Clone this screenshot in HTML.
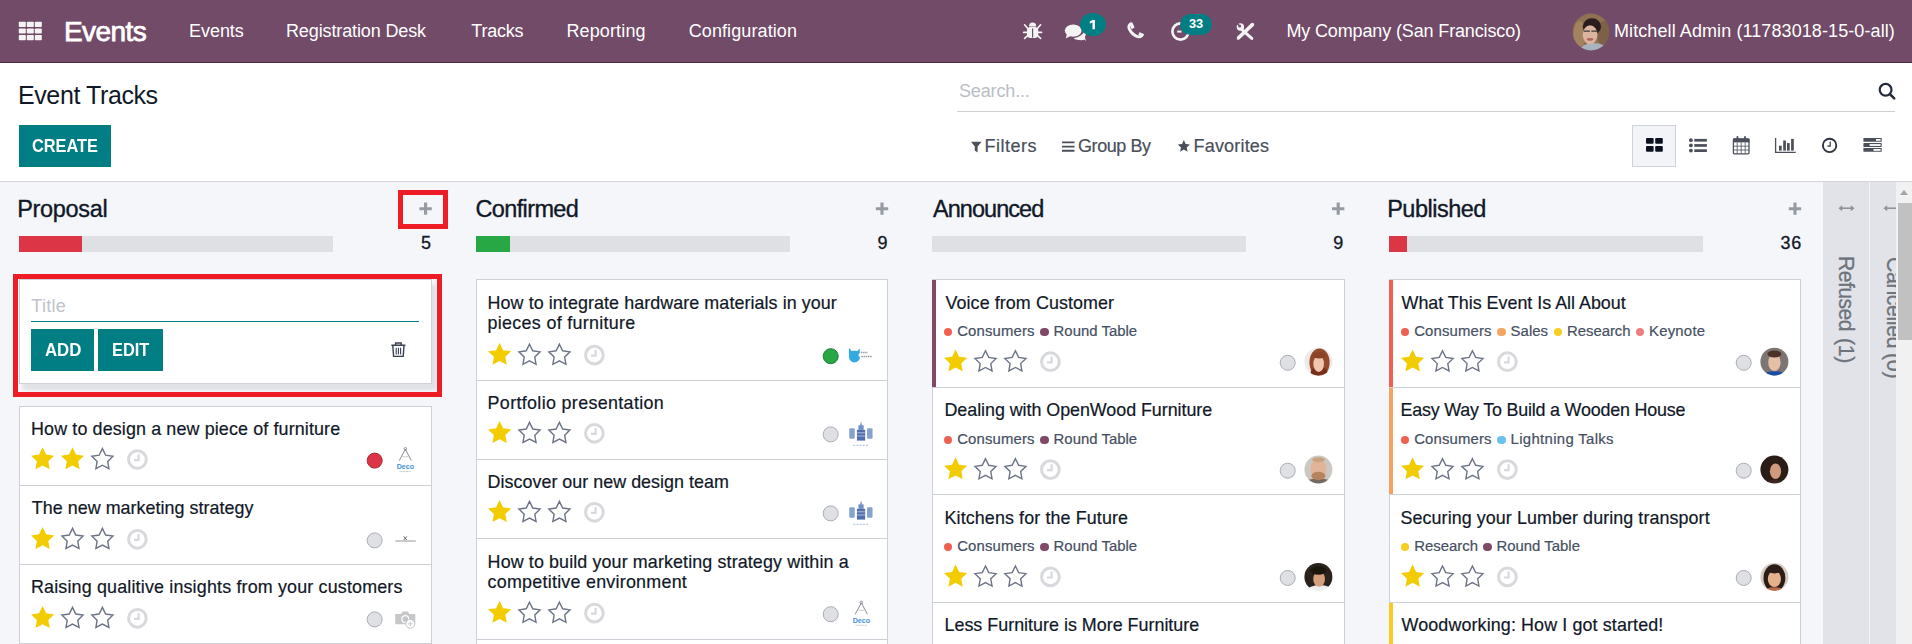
<!DOCTYPE html><html><head><meta charset="utf-8"><title>Event Tracks</title><style>
*{box-sizing:border-box;margin:0;padding:0}
html,body{width:1912px;height:644px;overflow:hidden;background:#fff;font-family:"Liberation Sans",sans-serif}
.a{position:absolute}
.t{position:absolute;white-space:nowrap;line-height:40px}
.dot{position:absolute;width:8.5px;height:8.5px;border-radius:50%}
.card{position:absolute;background:#fff;border:1px solid #cdd0d7}
.bar{position:absolute;height:16px;background:#dfe0e4}
.btn{position:absolute;background:#017e84}
svg{position:absolute;overflow:visible}
</style></head><body><div class="a" style="left:0;top:0;width:1912px;height:62px;background:#714b67"></div><div class="a" style="left:0;top:62px;width:1912px;height:1px;background:#4b2c44"></div><div class="a" style="left:0;top:181px;width:1912px;height:1px;background:#d4d6db"></div><div class="a" style="left:0;top:182px;width:1912px;height:462px;background:#f5f6fa"></div><div class="btn" style="left:19px;top:125px;width:92px;height:42px"></div><div class="a" style="left:957px;top:111px;width:938px;height:1px;background:#ccced3"></div><div class="a" style="left:1632px;top:125px;width:44px;height:42px;background:#f3f4f8;border:1px solid #cfd2d8"></div><div class="bar" style="left:19px;top:236px;width:314px"></div><div class="a" style="left:19px;top:236px;width:63px;height:16px;background:#dc3545"></div><div class="bar" style="left:476px;top:236px;width:314px"></div><div class="a" style="left:476px;top:236px;width:34px;height:16px;background:#28a745"></div><div class="bar" style="left:932px;top:236px;width:314px"></div><div class="bar" style="left:1389px;top:236px;width:314px"></div><div class="a" style="left:1389px;top:236px;width:18px;height:16px;background:#dc3545"></div><div class="card" style="left:19px;top:279px;width:413px;height:105px;border-color:#cfd2d8;box-shadow:4px 6px 3px 0 rgba(40,44,60,.10)"></div><div class="a" style="left:31px;top:321px;width:388px;height:1px;background:#017e84"></div><div class="btn" style="left:31px;top:329px;width:63px;height:42px"></div><div class="btn" style="left:98px;top:329px;width:65px;height:42px"></div><div class="card" style="left:19px;top:406px;width:413px;height:80px"></div><div class="card" style="left:19px;top:485px;width:413px;height:80px"></div><div class="card" style="left:19px;top:564px;width:413px;height:80px"></div><div class="card" style="left:19px;top:643px;width:413px;height:58px"></div><div class="card" style="left:476px;top:279px;width:412px;height:102px"></div><div class="card" style="left:476px;top:380px;width:412px;height:80px"></div><div class="card" style="left:476px;top:459px;width:412px;height:80px"></div><div class="card" style="left:476px;top:538px;width:412px;height:102px"></div><div class="card" style="left:476px;top:639px;width:412px;height:62px"></div><div class="card" style="left:932px;top:279px;width:413px;height:109px"></div><div class="a" style="left:932px;top:280px;width:4px;height:107px;background:#814968"></div><div class="card" style="left:932px;top:387px;width:413px;height:108px"></div><div class="card" style="left:932px;top:494px;width:413px;height:109px"></div><div class="card" style="left:932px;top:602px;width:413px;height:99px"></div><div class="card" style="left:1389px;top:279px;width:412px;height:109px"></div><div class="a" style="left:1389px;top:280px;width:4px;height:107px;background:#f06050"></div><div class="card" style="left:1389px;top:387px;width:412px;height:108px"></div><div class="a" style="left:1389px;top:388px;width:4px;height:106px;background:#f4a460"></div><div class="card" style="left:1389px;top:494px;width:412px;height:109px"></div><div class="card" style="left:1389px;top:602px;width:412px;height:99px"></div><div class="a" style="left:1389px;top:603px;width:4px;height:97px;background:#f7cd1f"></div><div class="a" style="left:1823px;top:182px;width:46px;height:462px;background:#e1e3e8"></div><div class="a" style="left:1870px;top:182px;width:27px;height:462px;background:#e1e3e8"></div><div class="dot" style="left:943.9px;top:327.8px;background:#f06050"></div><div class="dot" style="left:1040.3px;top:327.8px;background:#814968"></div><div class="dot" style="left:943.9px;top:435.8px;background:#f06050"></div><div class="dot" style="left:1040.3px;top:435.8px;background:#814968"></div><div class="dot" style="left:943.9px;top:542.8px;background:#f06050"></div><div class="dot" style="left:1040.3px;top:542.8px;background:#814968"></div><div class="dot" style="left:1400.9px;top:327.8px;background:#f06050"></div><div class="dot" style="left:1497.3px;top:327.8px;background:#f4a460"></div><div class="dot" style="left:1553.7px;top:327.8px;background:#f7cd1f"></div><div class="dot" style="left:1635.7px;top:327.8px;background:#eb7e7f"></div><div class="dot" style="left:1400.9px;top:435.8px;background:#f06050"></div><div class="dot" style="left:1497.3px;top:435.8px;background:#6cc1ed"></div><div class="dot" style="left:1400.9px;top:542.8px;background:#f7cd1f"></div><div class="dot" style="left:1483.1px;top:542.8px;background:#814968"></div><svg style="left:0;top:0" width="1912" height="644" viewBox="0 0 1912 644"><defs><filter id="blur" x="-20%" y="-20%" width="140%" height="140%"><feGaussianBlur stdDeviation="0.7"/></filter></defs><rect x="18.8" y="21.8" width="7" height="5.2" rx="0.8" fill="#f4f4f4"/><rect x="26.8" y="21.8" width="7" height="5.2" rx="0.8" fill="#f4f4f4"/><rect x="34.8" y="21.8" width="7" height="5.2" rx="0.8" fill="#f4f4f4"/><rect x="18.8" y="28.4" width="7" height="5.2" rx="0.8" fill="#f4f4f4"/><rect x="26.8" y="28.4" width="7" height="5.2" rx="0.8" fill="#f4f4f4"/><rect x="34.8" y="28.4" width="7" height="5.2" rx="0.8" fill="#f4f4f4"/><rect x="18.8" y="35.0" width="7" height="5.2" rx="0.8" fill="#f4f4f4"/><rect x="26.8" y="35.0" width="7" height="5.2" rx="0.8" fill="#f4f4f4"/><rect x="34.8" y="35.0" width="7" height="5.2" rx="0.8" fill="#f4f4f4"/><g fill="#f4f4f4"><path d="M1029 26.4 A3.6 3.9 0 0 1 1036.2 26.4 Z"/><rect x="1027" y="26.9" width="11.2" height="11.2" rx="3.6"/></g><path d="M1027.8 28.6 L1024.6 24.8 M1037.4 28.6 L1040.6 24.8 M1027 32.4 H1023.6 M1038.2 32.4 H1041.6 M1027.6 35.6 L1024.6 38.4 M1037.6 35.6 L1040.6 38.4" stroke="#f4f4f4" stroke-width="1.6" stroke-linecap="round"/><path d="M1032.6 28.4 V37.4" stroke="#714b67" stroke-width="1.2"/><g fill="#f4f4f4"><path d="M1074 39 Q1082 41 1084.5 39.6 L1086 41.2 L1084.9 36.8 Q1087 34 1085 31 Q1081 37 1074 38.2 Z"/><ellipse cx="1073.2" cy="30.6" rx="8.4" ry="6.2"/><path d="M1067 33.5 L1065.8 38.6 L1071.4 35.6 Z"/></g><ellipse cx="1093" cy="24.5" rx="13" ry="11.5" fill="#017e84"/><path d="M1092.5 19.9 H1094.9 V29.3 H1092.5 V22.6 L1089.8 23.6 V21.4 Z" fill="#fff"/><path d="M1130.8 23.6 Q1128.2 25.2 1129 28.4 Q1131.5 34.5 1137.6 36.7 Q1140.8 37.4 1142.5 34.8" stroke="#f4f4f4" stroke-width="2.8" fill="none" stroke-linecap="round"/><path d="M1129.2 23.4 L1132.4 22.6 L1134.6 27.4 L1131.6 29.2 Z M1143.4 34.6 L1142.6 37.2 L1138.2 35 L1139.6 32 Z" fill="#f4f4f4"/><circle cx="1180.5" cy="31.5" r="8.1" fill="none" stroke="#f4f4f4" stroke-width="2.6"/><path d="M1177.2 31.6 H1181.5" stroke="#f4f4f4" stroke-width="2"/><rect x="1180" y="14" width="32" height="21" rx="10.5" fill="#017e84"/><path d="M1242.4 30.2 L1251.8 38.4" stroke="#f4f4f4" stroke-width="3" stroke-linecap="round"/><circle cx="1240.4" cy="27" r="3.7" fill="#f4f4f4"/><circle cx="1239.6" cy="25.9" r="1.5" fill="#714b67"/><path d="M1239.6 25.9 L1236 24.2 L1238 21.6 Z" fill="#714b67"/><path d="M1238.6 37.8 L1252.4 24.6" stroke="#f4f4f4" stroke-width="3.6" stroke-linecap="round"/><path d="M1236.8 39.8 L1237.6 36.6 L1240 38.8 Z" fill="#f4f4f4"/><clipPath id="avnav"><circle cx="1591" cy="32" r="18.4"/></clipPath><g clip-path="url(#avnav)" filter="url(#blur)"><rect x="1570.6" y="11.600000000000001" width="40.8" height="40.8" fill="#8f7052"/><ellipse cx="1579.96" cy="33.84" rx="6.44" ry="12.88" fill="#a3835f"/><ellipse cx="1603.88" cy="33.84" rx="6.44" ry="12.88" fill="#7d6047"/><ellipse cx="1593.76" cy="50.40" rx="13.80" ry="7.36" fill="#a9b3bd"/><ellipse cx="1591.92" cy="26.48" rx="9.20" ry="8.28" fill="#2a1f1b"/><ellipse cx="1590.08" cy="34.76" rx="7.36" ry="9.57" fill="#dcb4a0"/><path d="M1583.64 31.08 h6.26 M1591.37 31.08 h6.26" stroke="#3a3a3a" stroke-width="1.1"/><ellipse cx="1590.08" cy="39.36" rx="3.31" ry="1.47" fill="#b0685a"/></g><circle cx="1885.6" cy="89.8" r="5.9" fill="none" stroke="#232b38" stroke-width="2.2"/><path d="M1890.2 94.4 L1894.2 98.4" stroke="#232b38" stroke-width="2.6" stroke-linecap="round"/><path d="M971 141.7 H981.6 L977.6 146.4 V152.4 L974.8 150.6 V146.4 Z" fill="#4a4f5a"/><path d="M1062 142.4 H1074.5 M1062 146.6 H1074.5 M1062 150.8 H1074.5" stroke="#4a4f5a" stroke-width="1.9"/><polygon points="1183.85,140.10 1185.61,144.07 1189.94,144.52 1186.70,147.43 1187.61,151.68 1183.85,149.50 1180.09,151.68 1181.00,147.43 1177.76,144.52 1182.09,144.07" fill="#4a4f5a"/><g fill="#0b1120"><rect x="1646" y="138" width="7.6" height="5.8" rx="1"/><rect x="1655.2" y="138" width="7.6" height="5.8" rx="1"/><rect x="1646" y="145.9" width="7.6" height="5.9" rx="1"/><rect x="1655.2" y="145.9" width="7.6" height="5.9" rx="1"/></g><g fill="#4a4f5a"><circle cx="1690.9" cy="140.2" r="1.9"/><circle cx="1690.9" cy="145.4" r="1.9"/><circle cx="1690.9" cy="150.6" r="1.9"/><rect x="1694.3" y="138.9" width="12.6" height="2.7"/><rect x="1694.3" y="144.1" width="12.6" height="2.7"/><rect x="1694.3" y="149.3" width="12.6" height="2.7"/></g><rect x="1733.4" y="139" width="15.6" height="14.8" rx="1" fill="none" stroke="#4a4f5a" stroke-width="1.3"/><rect x="1733" y="138.6" width="16.4" height="3.8" fill="#4a4f5a"/><path d="M1737.4 136.8 V140 M1745 136.8 V140" stroke="#4a4f5a" stroke-width="1.8" stroke-linecap="round"/><path d="M1737.2 142.4 V153.8 M1741.2 142.4 V153.8 M1745.2 142.4 V153.8 M1733.4 146.2 H1749 M1733.4 150 H1749" stroke="#4a4f5a" stroke-width="0.8"/><path d="M1775.6 138 V152.3 H1795.7" stroke="#4a4f5a" stroke-width="1.3" fill="none"/><g fill="#4a4f5a"><rect x="1779" y="145.7" width="2.7" height="4.9"/><rect x="1783.2" y="140.5" width="2.7" height="10.1"/><rect x="1787" y="143.1" width="2.7" height="7.5"/><rect x="1791.1" y="138.9" width="2.7" height="11.7"/></g><circle cx="1829.6" cy="145.4" r="6.7" fill="none" stroke="#2d3340" stroke-width="1.9"/><path d="M1830.2 141.6 V146.2 H1827.4" stroke="#2d3340" stroke-width="1.2" fill="none"/><g fill="#4a4f5a"><rect x="1863.4" y="138" width="18.3" height="3.8" rx="0.6"/><rect x="1863.4" y="143.1" width="18.3" height="3.8" rx="0.6"/><rect x="1863.4" y="148" width="18.3" height="3.8" rx="0.6"/></g><g fill="#fff"><rect x="1876" y="139" width="4.6" height="1.8"/><rect x="1869.6" y="144.1" width="11" height="1.8"/><rect x="1873.5" y="149" width="7.1" height="1.8"/></g><path d="M425.59999999999997 202.6 V214.79999999999998 M419.4 208.7 H431.79999999999995" stroke="#959aa3" stroke-width="3.1"/><path d="M882.0 202.6 V214.79999999999998 M875.8 208.7 H888.1999999999999" stroke="#959aa3" stroke-width="3.1"/><path d="M1338.2 202.6 V214.79999999999998 M1332.0 208.7 H1344.4" stroke="#959aa3" stroke-width="3.1"/><path d="M1795.0 202.6 V214.79999999999998 M1788.8 208.7 H1801.2" stroke="#959aa3" stroke-width="3.1"/><path d="M391.4 345.2 H405.4 M395.6 345 V343 H401.2 V345" stroke="#374151" stroke-width="1.4" fill="none"/><path d="M392.8 345.6 L393.6 356.4 H403.2 L404 345.6" stroke="#374151" stroke-width="1.4" fill="none"/><path d="M396.2 347.8 V354.4 M398.4 347.8 V354.4 M400.6 347.8 V354.4" stroke="#374151" stroke-width="1.1"/><polygon points="42.60,447.20 46.12,454.56 54.21,455.63 48.29,461.25 49.77,469.27 42.60,465.38 35.43,469.27 36.92,461.25 31.00,455.63 39.09,454.56" fill="#f3cc00"/><polygon points="72.50,447.20 76.02,454.56 84.11,455.63 78.19,461.25 79.67,469.27 72.50,465.38 65.33,469.27 66.82,461.25 60.90,455.63 68.99,454.56" fill="#f3cc00"/><polygon points="102.40,448.60 105.67,455.21 112.96,456.27 107.68,461.42 108.93,468.68 102.40,465.25 95.88,468.68 97.12,461.42 91.85,456.27 99.14,455.21" fill="none" stroke="#6b7385" stroke-width="1.4" stroke-linejoin="miter"/><circle cx="137.4" cy="459.5" r="8.85" fill="none" stroke="#d8d9dc" stroke-width="3"/><path d="M138.6 454.2 V461.0 M134.0 460.1 H139.70000000000002" stroke="#d8d9dc" stroke-width="2.2" fill="none"/><circle cx="374.7" cy="460.59999999999997" r="7.5" fill="#dc3545" stroke="#a52834" stroke-width="1"/><path d="M399.25 460.6 L405.35 449.2 L411.35 460.6" stroke="#7a7f88" stroke-width="0.9" fill="none"/><circle cx="405.35" cy="448.8" r="1.3" fill="none" stroke="#7a7f88" stroke-width="0.8"/><path d="M402.25 456.4 Q405.25 457.6 408.25 456.4" stroke="#b0b4ba" stroke-width="0.7" fill="none"/><text x="396.65" y="469.0" font-size="7.4" font-weight="700" fill="#4a90d9" textLength="17.4" lengthAdjust="spacingAndGlyphs" font-family="Liberation Sans">Deco</text><path d="M399.65 471.6 H410.85" stroke="#c0c0c0" stroke-width="1" stroke-dasharray="1 0.5"/><polygon points="42.60,527.00 46.12,534.36 54.21,535.43 48.29,541.05 49.77,549.07 42.60,545.18 35.43,549.07 36.92,541.05 31.00,535.43 39.09,534.36" fill="#f3cc00"/><polygon points="72.50,528.40 75.77,535.01 83.06,536.07 77.78,541.22 79.03,548.48 72.50,545.05 65.98,548.48 67.22,541.22 61.95,536.07 69.24,535.01" fill="none" stroke="#6b7385" stroke-width="1.4" stroke-linejoin="miter"/><polygon points="102.40,528.40 105.67,535.01 112.96,536.07 107.68,541.22 108.93,548.48 102.40,545.05 95.88,548.48 97.12,541.22 91.85,536.07 99.14,535.01" fill="none" stroke="#6b7385" stroke-width="1.4" stroke-linejoin="miter"/><circle cx="137.4" cy="539.3" r="8.85" fill="none" stroke="#d8d9dc" stroke-width="3"/><path d="M138.6 534.0 V540.8 M134.0 539.9 H139.70000000000002" stroke="#d8d9dc" stroke-width="2.2" fill="none"/><circle cx="374.7" cy="540.4" r="7.5" fill="#dee0e4" stroke="#a9adb5" stroke-width="1"/><path d="M395.25 541.0 H415.75" stroke="#8a8a8a" stroke-width="0.9"/><path d="M403.65 536.4 L406.85 540.0 M406.85 536.4 L403.65 540.0" stroke="#555" stroke-width="0.9"/><polygon points="42.60,606.00 46.12,613.36 54.21,614.43 48.29,620.05 49.77,628.07 42.60,624.18 35.43,628.07 36.92,620.05 31.00,614.43 39.09,613.36" fill="#f3cc00"/><polygon points="72.50,607.40 75.77,614.01 83.06,615.07 77.78,620.22 79.03,627.48 72.50,624.05 65.98,627.48 67.22,620.22 61.95,615.07 69.24,614.01" fill="none" stroke="#6b7385" stroke-width="1.4" stroke-linejoin="miter"/><polygon points="102.40,607.40 105.67,614.01 112.96,615.07 107.68,620.22 108.93,627.48 102.40,624.05 95.88,627.48 97.12,620.22 91.85,615.07 99.14,614.01" fill="none" stroke="#6b7385" stroke-width="1.4" stroke-linejoin="miter"/><circle cx="137.4" cy="618.3" r="8.85" fill="none" stroke="#d8d9dc" stroke-width="3"/><path d="M138.6 613.0 V619.8 M134.0 618.9 H139.70000000000002" stroke="#d8d9dc" stroke-width="2.2" fill="none"/><circle cx="374.7" cy="619.4" r="7.5" fill="#dee0e4" stroke="#a9adb5" stroke-width="1"/><path d="M395.25 614.0 H401.05 L402.65 611.4 H407.85 L409.45 614.0 H415.25 V624.1999999999999 H395.25 Z" fill="#c6c7c9"/><circle cx="405.25" cy="619.0999999999999" r="4" fill="#fff"/><circle cx="405.25" cy="619.0999999999999" r="2.8" fill="#c6c7c9"/><circle cx="410.25" cy="623.8" r="4.4" fill="#fff" stroke="#c6c7c9" stroke-width="1"/><path d="M410.25 621.4 V626.1999999999999 M407.85 623.8 H412.65" stroke="#c6c7c9" stroke-width="1"/><polygon points="499.60,342.80 503.12,350.16 511.21,351.23 505.29,356.85 506.77,364.87 499.60,360.98 492.43,364.87 493.92,356.85 488.00,351.23 496.09,350.16" fill="#f3cc00"/><polygon points="529.50,344.20 532.77,350.81 540.06,351.87 534.78,357.02 536.03,364.28 529.50,360.85 522.98,364.28 524.22,357.02 518.95,351.87 526.24,350.81" fill="none" stroke="#6b7385" stroke-width="1.4" stroke-linejoin="miter"/><polygon points="559.40,344.20 562.67,350.81 569.96,351.87 564.68,357.02 565.93,364.28 559.40,360.85 552.88,364.28 554.12,357.02 548.85,351.87 556.14,350.81" fill="none" stroke="#6b7385" stroke-width="1.4" stroke-linejoin="miter"/><circle cx="594.4" cy="355.1" r="8.85" fill="none" stroke="#d8d9dc" stroke-width="3"/><path d="M595.6 349.8 V356.6 M591.0 355.70000000000005 H596.6999999999999" stroke="#d8d9dc" stroke-width="2.2" fill="none"/><circle cx="830.7" cy="356.2" r="7.5" fill="#28a745" stroke="#1e7e34" stroke-width="1"/><g fill="#33a9e0"><ellipse cx="854.45" cy="356.6" rx="5.6" ry="6"/><path d="M849.05 347.8 L852.75 352.6 L848.85 354.6 Z M859.65 348.20000000000005 L856.25 352.6 L859.85 354.6 Z"/></g><ellipse cx="860.65" cy="355.0" rx="2.2" ry="2" fill="#fff"/><path d="M860.75 352.40000000000003 H867.75 M861.25 356.6 H871.75" stroke="#9a9ea6" stroke-width="1.5" stroke-dasharray="1.6 0.6"/><polygon points="499.60,421.00 503.12,428.36 511.21,429.43 505.29,435.05 506.77,443.07 499.60,439.18 492.43,443.07 493.92,435.05 488.00,429.43 496.09,428.36" fill="#f3cc00"/><polygon points="529.50,422.40 532.77,429.01 540.06,430.07 534.78,435.22 536.03,442.48 529.50,439.05 522.98,442.48 524.22,435.22 518.95,430.07 526.24,429.01" fill="none" stroke="#6b7385" stroke-width="1.4" stroke-linejoin="miter"/><polygon points="559.40,422.40 562.67,429.01 569.96,430.07 564.68,435.22 565.93,442.48 559.40,439.05 552.88,442.48 554.12,435.22 548.85,430.07 556.14,429.01" fill="none" stroke="#6b7385" stroke-width="1.4" stroke-linejoin="miter"/><circle cx="594.4" cy="433.3" r="8.85" fill="none" stroke="#d8d9dc" stroke-width="3"/><path d="M595.6 428.0 V434.8 M591.0 433.90000000000003 H596.6999999999999" stroke="#d8d9dc" stroke-width="2.2" fill="none"/><circle cx="830.7" cy="434.4" r="7.5" fill="#dee0e4" stroke="#a9adb5" stroke-width="1"/><g fill="#86a2cf"><rect x="849.25" y="428.3" width="5.5" height="10.5" rx="1"/><rect x="867.05" y="428.3" width="5.5" height="10.5" rx="1"/></g><g fill="#4f6fae"><rect x="856.95" y="429.8" width="8.2" height="10.8"/><rect x="858.45" y="425.3" width="5.2" height="4.6" fill="#6f8fc4"/><path d="M860.25 425.3 L861.05 421.40000000000003 L861.85 425.3 Z"/></g><path d="M857.25 432.8 H864.85 M857.25 436.0 H864.85" stroke="#c6d3ea" stroke-width="0.8"/><path d="M853.25 445.3 H868.25" stroke="#9fb4d8" stroke-width="0.9" stroke-dasharray="2 1.2"/><polygon points="499.60,500.00 503.12,507.36 511.21,508.43 505.29,514.05 506.77,522.07 499.60,518.18 492.43,522.07 493.92,514.05 488.00,508.43 496.09,507.36" fill="#f3cc00"/><polygon points="529.50,501.40 532.77,508.01 540.06,509.07 534.78,514.22 536.03,521.48 529.50,518.05 522.98,521.48 524.22,514.22 518.95,509.07 526.24,508.01" fill="none" stroke="#6b7385" stroke-width="1.4" stroke-linejoin="miter"/><polygon points="559.40,501.40 562.67,508.01 569.96,509.07 564.68,514.22 565.93,521.48 559.40,518.05 552.88,521.48 554.12,514.22 548.85,509.07 556.14,508.01" fill="none" stroke="#6b7385" stroke-width="1.4" stroke-linejoin="miter"/><circle cx="594.4" cy="512.3" r="8.85" fill="none" stroke="#d8d9dc" stroke-width="3"/><path d="M595.6 506.99999999999994 V513.8 M591.0 512.9 H596.6999999999999" stroke="#d8d9dc" stroke-width="2.2" fill="none"/><circle cx="830.7" cy="513.4" r="7.5" fill="#dee0e4" stroke="#a9adb5" stroke-width="1"/><g fill="#86a2cf"><rect x="849.25" y="507.29999999999995" width="5.5" height="10.5" rx="1"/><rect x="867.05" y="507.29999999999995" width="5.5" height="10.5" rx="1"/></g><g fill="#4f6fae"><rect x="856.95" y="508.79999999999995" width="8.2" height="10.8"/><rect x="858.45" y="504.29999999999995" width="5.2" height="4.6" fill="#6f8fc4"/><path d="M860.25 504.29999999999995 L861.05 500.4 L861.85 504.29999999999995 Z"/></g><path d="M857.25 511.79999999999995 H864.85 M857.25 515.0 H864.85" stroke="#c6d3ea" stroke-width="0.8"/><path d="M853.25 524.3 H868.25" stroke="#9fb4d8" stroke-width="0.9" stroke-dasharray="2 1.2"/><polygon points="499.60,600.80 503.12,608.16 511.21,609.23 505.29,614.85 506.77,622.87 499.60,618.98 492.43,622.87 493.92,614.85 488.00,609.23 496.09,608.16" fill="#f3cc00"/><polygon points="529.50,602.20 532.77,608.81 540.06,609.87 534.78,615.02 536.03,622.28 529.50,618.85 522.98,622.28 524.22,615.02 518.95,609.87 526.24,608.81" fill="none" stroke="#6b7385" stroke-width="1.4" stroke-linejoin="miter"/><polygon points="559.40,602.20 562.67,608.81 569.96,609.87 564.68,615.02 565.93,622.28 559.40,618.85 552.88,622.28 554.12,615.02 548.85,609.87 556.14,608.81" fill="none" stroke="#6b7385" stroke-width="1.4" stroke-linejoin="miter"/><circle cx="594.4" cy="613.0999999999999" r="8.85" fill="none" stroke="#d8d9dc" stroke-width="3"/><path d="M595.6 607.8 V614.5999999999999 M591.0 613.6999999999999 H596.6999999999999" stroke="#d8d9dc" stroke-width="2.2" fill="none"/><circle cx="830.7" cy="614.1999999999999" r="7.5" fill="#dee0e4" stroke="#a9adb5" stroke-width="1"/><path d="M855.25 614.1999999999999 L861.35 602.8 L867.35 614.1999999999999" stroke="#7a7f88" stroke-width="0.9" fill="none"/><circle cx="861.35" cy="602.3999999999999" r="1.3" fill="none" stroke="#7a7f88" stroke-width="0.8"/><path d="M858.25 609.9999999999999 Q861.25 611.1999999999999 864.25 609.9999999999999" stroke="#b0b4ba" stroke-width="0.7" fill="none"/><text x="852.65" y="622.5999999999999" font-size="7.4" font-weight="700" fill="#4a90d9" textLength="17.4" lengthAdjust="spacingAndGlyphs" font-family="Liberation Sans">Deco</text><path d="M855.65 625.1999999999999 H866.85" stroke="#c0c0c0" stroke-width="1" stroke-dasharray="1 0.5"/><polygon points="955.60,349.40 959.12,356.76 967.21,357.83 961.29,363.45 962.77,371.47 955.60,367.58 948.43,371.47 949.92,363.45 944.00,357.83 952.09,356.76" fill="#f3cc00"/><polygon points="985.50,350.80 988.77,357.41 996.06,358.47 990.78,363.62 992.03,370.88 985.50,367.45 978.98,370.88 980.22,363.62 974.95,358.47 982.24,357.41" fill="none" stroke="#6b7385" stroke-width="1.4" stroke-linejoin="miter"/><polygon points="1015.40,350.80 1018.67,357.41 1025.96,358.47 1020.68,363.62 1021.93,370.88 1015.40,367.45 1008.88,370.88 1010.12,363.62 1004.85,358.47 1012.14,357.41" fill="none" stroke="#6b7385" stroke-width="1.4" stroke-linejoin="miter"/><circle cx="1050.4" cy="361.7" r="8.85" fill="none" stroke="#d8d9dc" stroke-width="3"/><path d="M1051.6000000000001 356.4 V363.2 M1047.0 362.3 H1052.7" stroke="#d8d9dc" stroke-width="2.2" fill="none"/><circle cx="1287.7" cy="362.79999999999995" r="7.5" fill="#dee0e4" stroke="#a9adb5" stroke-width="1"/><clipPath id="av8"><circle cx="1318.4" cy="361.7" r="14"/></clipPath><g clip-path="url(#av8)" filter="url(#blur)"><rect x="1302.4" y="345.7" width="32" height="32" fill="#eeeae8"/><ellipse cx="1319.52" cy="362.40" rx="10.08" ry="14.00" fill="#96492b"/><ellipse cx="1319.10" cy="372.20" rx="8.40" ry="5.60" fill="#7a2e1d"/><ellipse cx="1318.68" cy="363.80" rx="5.32" ry="8.12" fill="#efc7ae"/><ellipse cx="1319.10" cy="355.40" rx="6.72" ry="3.08" fill="#8c4226"/></g><polygon points="955.60,457.30 959.12,464.66 967.21,465.73 961.29,471.35 962.77,479.37 955.60,475.48 948.43,479.37 949.92,471.35 944.00,465.73 952.09,464.66" fill="#f3cc00"/><polygon points="985.50,458.70 988.77,465.31 996.06,466.37 990.78,471.52 992.03,478.78 985.50,475.35 978.98,478.78 980.22,471.52 974.95,466.37 982.24,465.31" fill="none" stroke="#6b7385" stroke-width="1.4" stroke-linejoin="miter"/><polygon points="1015.40,458.70 1018.67,465.31 1025.96,466.37 1020.68,471.52 1021.93,478.78 1015.40,475.35 1008.88,478.78 1010.12,471.52 1004.85,466.37 1012.14,465.31" fill="none" stroke="#6b7385" stroke-width="1.4" stroke-linejoin="miter"/><circle cx="1050.4" cy="469.6" r="8.85" fill="none" stroke="#d8d9dc" stroke-width="3"/><path d="M1051.6000000000001 464.3 V471.1 M1047.0 470.20000000000005 H1052.7" stroke="#d8d9dc" stroke-width="2.2" fill="none"/><circle cx="1287.7" cy="470.7" r="7.5" fill="#dee0e4" stroke="#a9adb5" stroke-width="1"/><clipPath id="av9"><circle cx="1318.4" cy="469.6" r="14"/></clipPath><g clip-path="url(#av9)" filter="url(#blur)"><rect x="1302.4" y="453.6" width="32" height="32" fill="#cbc7c3"/><ellipse cx="1318.40" cy="483.60" rx="13.30" ry="5.32" fill="#75685e"/><ellipse cx="1318.40" cy="468.90" rx="7.84" ry="10.08" fill="#e1b497"/><ellipse cx="1318.40" cy="475.90" rx="7.00" ry="4.20" fill="#b68561"/><ellipse cx="1318.40" cy="459.80" rx="6.30" ry="2.52" fill="#c9a27f"/></g><polygon points="955.60,564.60 959.12,571.96 967.21,573.03 961.29,578.65 962.77,586.67 955.60,582.78 948.43,586.67 949.92,578.65 944.00,573.03 952.09,571.96" fill="#f3cc00"/><polygon points="985.50,566.00 988.77,572.61 996.06,573.67 990.78,578.82 992.03,586.08 985.50,582.65 978.98,586.08 980.22,578.82 974.95,573.67 982.24,572.61" fill="none" stroke="#6b7385" stroke-width="1.4" stroke-linejoin="miter"/><polygon points="1015.40,566.00 1018.67,572.61 1025.96,573.67 1020.68,578.82 1021.93,586.08 1015.40,582.65 1008.88,586.08 1010.12,578.82 1004.85,573.67 1012.14,572.61" fill="none" stroke="#6b7385" stroke-width="1.4" stroke-linejoin="miter"/><circle cx="1050.4" cy="576.9" r="8.85" fill="none" stroke="#d8d9dc" stroke-width="3"/><path d="M1051.6000000000001 571.6 V578.4 M1047.0 577.5 H1052.7" stroke="#d8d9dc" stroke-width="2.2" fill="none"/><circle cx="1287.7" cy="578.0" r="7.5" fill="#dee0e4" stroke="#a9adb5" stroke-width="1"/><clipPath id="av10"><circle cx="1318.4" cy="576.9" r="14"/></clipPath><g clip-path="url(#av10)" filter="url(#blur)"><rect x="1302.4" y="560.9" width="32" height="32" fill="#2a211e"/><ellipse cx="1319.80" cy="590.90" rx="12.60" ry="5.88" fill="#eeeeee"/><ellipse cx="1319.10" cy="579.00" rx="5.88" ry="7.70" fill="#d49f7a"/><ellipse cx="1318.40" cy="570.60" rx="7.70" ry="4.20" fill="#1c1411"/></g><polygon points="1412.60,349.40 1416.12,356.76 1424.21,357.83 1418.29,363.45 1419.77,371.47 1412.60,367.58 1405.43,371.47 1406.92,363.45 1401.00,357.83 1409.09,356.76" fill="#f3cc00"/><polygon points="1442.50,350.80 1445.77,357.41 1453.06,358.47 1447.78,363.62 1449.03,370.88 1442.50,367.45 1435.98,370.88 1437.22,363.62 1431.95,358.47 1439.24,357.41" fill="none" stroke="#6b7385" stroke-width="1.4" stroke-linejoin="miter"/><polygon points="1472.40,350.80 1475.67,357.41 1482.96,358.47 1477.68,363.62 1478.93,370.88 1472.40,367.45 1465.88,370.88 1467.12,363.62 1461.85,358.47 1469.14,357.41" fill="none" stroke="#6b7385" stroke-width="1.4" stroke-linejoin="miter"/><circle cx="1507.4" cy="361.7" r="8.85" fill="none" stroke="#d8d9dc" stroke-width="3"/><path d="M1508.6000000000001 356.4 V363.2 M1504.0 362.3 H1509.7" stroke="#d8d9dc" stroke-width="2.2" fill="none"/><circle cx="1743.7" cy="362.79999999999995" r="7.5" fill="#dee0e4" stroke="#a9adb5" stroke-width="1"/><clipPath id="av11"><circle cx="1774.4" cy="361.7" r="14"/></clipPath><g clip-path="url(#av11)" filter="url(#blur)"><rect x="1758.4" y="345.7" width="32" height="32" fill="#7c7573"/><ellipse cx="1774.40" cy="375.70" rx="11.90" ry="4.48" fill="#1e4ea4"/><ellipse cx="1774.40" cy="362.40" rx="6.16" ry="8.68" fill="#e4c0a6"/><ellipse cx="1774.40" cy="354.00" rx="7.00" ry="3.50" fill="#4b3328"/></g><polygon points="1412.60,457.30 1416.12,464.66 1424.21,465.73 1418.29,471.35 1419.77,479.37 1412.60,475.48 1405.43,479.37 1406.92,471.35 1401.00,465.73 1409.09,464.66" fill="#f3cc00"/><polygon points="1442.50,458.70 1445.77,465.31 1453.06,466.37 1447.78,471.52 1449.03,478.78 1442.50,475.35 1435.98,478.78 1437.22,471.52 1431.95,466.37 1439.24,465.31" fill="none" stroke="#6b7385" stroke-width="1.4" stroke-linejoin="miter"/><polygon points="1472.40,458.70 1475.67,465.31 1482.96,466.37 1477.68,471.52 1478.93,478.78 1472.40,475.35 1465.88,478.78 1467.12,471.52 1461.85,466.37 1469.14,465.31" fill="none" stroke="#6b7385" stroke-width="1.4" stroke-linejoin="miter"/><circle cx="1507.4" cy="469.6" r="8.85" fill="none" stroke="#d8d9dc" stroke-width="3"/><path d="M1508.6000000000001 464.3 V471.1 M1504.0 470.20000000000005 H1509.7" stroke="#d8d9dc" stroke-width="2.2" fill="none"/><circle cx="1743.7" cy="470.7" r="7.5" fill="#dee0e4" stroke="#a9adb5" stroke-width="1"/><clipPath id="av12"><circle cx="1774.4" cy="469.6" r="14"/></clipPath><g clip-path="url(#av12)" filter="url(#blur)"><rect x="1758.4" y="453.6" width="32" height="32" fill="#2c1d19"/><ellipse cx="1775.52" cy="471.28" rx="5.60" ry="7.84" fill="#cf9a7e"/><ellipse cx="1774.40" cy="482.90" rx="7.00" ry="3.50" fill="#3b2520"/></g><polygon points="1412.60,564.60 1416.12,571.96 1424.21,573.03 1418.29,578.65 1419.77,586.67 1412.60,582.78 1405.43,586.67 1406.92,578.65 1401.00,573.03 1409.09,571.96" fill="#f3cc00"/><polygon points="1442.50,566.00 1445.77,572.61 1453.06,573.67 1447.78,578.82 1449.03,586.08 1442.50,582.65 1435.98,586.08 1437.22,578.82 1431.95,573.67 1439.24,572.61" fill="none" stroke="#6b7385" stroke-width="1.4" stroke-linejoin="miter"/><polygon points="1472.40,566.00 1475.67,572.61 1482.96,573.67 1477.68,578.82 1478.93,586.08 1472.40,582.65 1465.88,586.08 1467.12,578.82 1461.85,573.67 1469.14,572.61" fill="none" stroke="#6b7385" stroke-width="1.4" stroke-linejoin="miter"/><circle cx="1507.4" cy="576.9" r="8.85" fill="none" stroke="#d8d9dc" stroke-width="3"/><path d="M1508.6000000000001 571.6 V578.4 M1504.0 577.5 H1509.7" stroke="#d8d9dc" stroke-width="2.2" fill="none"/><circle cx="1743.7" cy="578.0" r="7.5" fill="#dee0e4" stroke="#a9adb5" stroke-width="1"/><clipPath id="av13"><circle cx="1774.4" cy="576.9" r="14"/></clipPath><g clip-path="url(#av13)" filter="url(#blur)"><rect x="1758.4" y="560.9" width="32" height="32" fill="#d5cbc2"/><ellipse cx="1774.40" cy="578.02" rx="10.92" ry="13.72" fill="#2c1e18"/><ellipse cx="1774.40" cy="579.00" rx="6.58" ry="8.12" fill="#e5b18d"/><ellipse cx="1774.40" cy="570.60" rx="7.00" ry="2.80" fill="#2c1e18"/><ellipse cx="1774.40" cy="591.18" rx="10.50" ry="3.92" fill="#b46a4b"/></g><path d="M1840 208.2 H1853" stroke="#8d929b" stroke-width="1.6"/><path d="M1838.4 208.2 L1842.2 205.2 V211.2 Z M1854.6 208.2 L1850.8 205.2 V211.2 Z" fill="#8d929b"/><path d="M1885 208.2 H1896" stroke="#8d929b" stroke-width="1.6"/><path d="M1883.4 208.2 L1887.2 205.2 V211.2 Z" fill="#8d929b"/></svg><div class="t" style="left:63.90px;top:11.80px;font-size:28px;font-weight:400;color:#ffffff;letter-spacing:-0.560px;-webkit-text-stroke:0.75px #fff;">Events</div><div class="t" style="left:189.00px;top:11.00px;font-size:18px;font-weight:400;color:#ffffff;letter-spacing:-0.040px;">Events</div><div class="t" style="left:286.00px;top:11.00px;font-size:18px;font-weight:400;color:#ffffff;letter-spacing:-0.125px;">Registration Desk</div><div class="t" style="left:471.30px;top:11.00px;font-size:18px;font-weight:400;color:#ffffff;letter-spacing:-0.220px;">Tracks</div><div class="t" style="left:566.40px;top:11.00px;font-size:18px;font-weight:400;color:#ffffff;letter-spacing:0.138px;">Reporting</div><div class="t" style="left:688.70px;top:11.00px;font-size:18px;font-weight:400;color:#ffffff;letter-spacing:0.100px;">Configuration</div><div class="t" style="left:1286.40px;top:10.80px;font-size:18px;font-weight:400;color:#ffffff;letter-spacing:-0.136px;">My Company (San Francisco)</div><div class="t" style="left:1614.00px;top:10.70px;font-size:18px;font-weight:400;color:#ffffff;letter-spacing:0.091px;">Mitchell Admin (11783018-15-0-all)</div><div class="t" style="left:18.00px;top:74.50px;font-size:25px;font-weight:400;color:#111827;letter-spacing:-0.400px;">Event Tracks</div><div class="t" style="left:32.09px;top:125.70px;font-size:18px;font-weight:700;color:#fff;transform:scaleX(0.9070);transform-origin:0 0;">CREATE</div><div class="t" style="left:959.00px;top:71.20px;font-size:18px;font-weight:400;color:#b9bec6;letter-spacing:-0.150px;">Search...</div><div class="t" style="left:984.60px;top:125.50px;font-size:18px;font-weight:400;color:#4a4f5a;letter-spacing:0.483px;-webkit-text-stroke:0.2px #4a4f5a;">Filters</div><div class="t" style="left:1078.00px;top:125.70px;font-size:18px;font-weight:400;color:#4a4f5a;letter-spacing:-0.429px;-webkit-text-stroke:0.2px #4a4f5a;">Group By</div><div class="t" style="left:1193.60px;top:125.70px;font-size:18px;font-weight:400;color:#4a4f5a;letter-spacing:0.175px;-webkit-text-stroke:0.2px #4a4f5a;">Favorites</div><div class="t" style="left:17.20px;top:189.30px;font-size:23.5px;font-weight:400;color:#111827;letter-spacing:-0.329px;-webkit-text-stroke:0.35px #111827;">Proposal</div><div class="t" style="left:475.40px;top:189.30px;font-size:23.5px;font-weight:400;color:#111827;letter-spacing:-0.612px;-webkit-text-stroke:0.35px #111827;">Confirmed</div><div class="t" style="left:932.90px;top:189.20px;font-size:23.5px;font-weight:400;color:#111827;letter-spacing:-0.937px;-webkit-text-stroke:0.35px #111827;">Announced</div><div class="t" style="left:1387.20px;top:189.30px;font-size:23.5px;font-weight:400;color:#111827;letter-spacing:-0.500px;-webkit-text-stroke:0.35px #111827;">Published</div><div class="t" style="left:421.00px;top:222.70px;font-size:18px;font-weight:400;color:#111827;letter-spacing:0.000px;-webkit-text-stroke:0.3px #111827;">5</div><div class="t" style="left:877.60px;top:222.70px;font-size:18px;font-weight:400;color:#111827;letter-spacing:0.000px;-webkit-text-stroke:0.3px #111827;">9</div><div class="t" style="left:1333.30px;top:222.70px;font-size:18px;font-weight:400;color:#111827;letter-spacing:0.000px;-webkit-text-stroke:0.3px #111827;">9</div><div class="t" style="left:1780.40px;top:222.70px;font-size:18px;font-weight:400;color:#111827;letter-spacing:0.800px;-webkit-text-stroke:0.3px #111827;">36</div><div class="t" style="left:31.30px;top:286.20px;font-size:18px;font-weight:400;color:#c0c4ca;letter-spacing:0.275px;">Title</div><div class="t" style="left:44.87px;top:330.00px;font-size:18px;font-weight:700;color:#fff;transform:scaleX(0.9324);transform-origin:0 0;">ADD</div><div class="t" style="left:111.99px;top:330.00px;font-size:18px;font-weight:700;color:#fff;transform:scaleX(0.9100);transform-origin:0 0;">EDIT</div><div class="t" style="left:31.00px;top:408.70px;font-size:17.9px;font-weight:400;color:#111827;letter-spacing:0.130px;-webkit-text-stroke:0.2px #111827;">How to design a new piece of furniture</div><div class="t" style="left:31.80px;top:487.80px;font-size:17.9px;font-weight:400;color:#111827;letter-spacing:0.032px;-webkit-text-stroke:0.2px #111827;">The new marketing strategy</div><div class="t" style="left:31.00px;top:566.60px;font-size:17.9px;font-weight:400;color:#111827;letter-spacing:0.167px;-webkit-text-stroke:0.2px #111827;">Raising qualitive insights from your customers</div><div class="t" style="left:487.60px;top:282.80px;font-size:17.9px;font-weight:400;color:#111827;letter-spacing:0.076px;-webkit-text-stroke:0.2px #111827;">How to integrate hardware materials in your</div><div class="t" style="left:487.60px;top:303.30px;font-size:17.9px;font-weight:400;color:#111827;letter-spacing:0.300px;-webkit-text-stroke:0.2px #111827;">pieces of furniture</div><div class="t" style="left:487.60px;top:382.80px;font-size:17.9px;font-weight:400;color:#111827;letter-spacing:0.338px;-webkit-text-stroke:0.2px #111827;">Portfolio presentation</div><div class="t" style="left:487.60px;top:461.80px;font-size:17.9px;font-weight:400;color:#111827;letter-spacing:0.022px;-webkit-text-stroke:0.2px #111827;">Discover our new design team</div><div class="t" style="left:487.60px;top:541.80px;font-size:17.9px;font-weight:400;color:#111827;letter-spacing:0.114px;-webkit-text-stroke:0.2px #111827;">How to build your marketing strategy within a</div><div class="t" style="left:487.60px;top:562.30px;font-size:17.9px;font-weight:400;color:#111827;letter-spacing:0.241px;-webkit-text-stroke:0.2px #111827;">competitive environment</div><div class="t" style="left:945.50px;top:282.80px;font-size:17.9px;font-weight:400;color:#111827;letter-spacing:0.083px;-webkit-text-stroke:0.2px #111827;">Voice from Customer</div><div class="t" style="left:944.50px;top:389.80px;font-size:17.9px;font-weight:400;color:#111827;letter-spacing:-0.050px;-webkit-text-stroke:0.2px #111827;">Dealing with OpenWood Furniture</div><div class="t" style="left:944.50px;top:497.80px;font-size:17.9px;font-weight:400;color:#111827;letter-spacing:0.114px;-webkit-text-stroke:0.2px #111827;">Kitchens for the Future</div><div class="t" style="left:944.50px;top:604.80px;font-size:17.9px;font-weight:400;color:#111827;letter-spacing:0.006px;-webkit-text-stroke:0.2px #111827;">Less Furniture is More Furniture</div><div class="t" style="left:1401.50px;top:282.80px;font-size:17.9px;font-weight:400;color:#111827;letter-spacing:-0.007px;-webkit-text-stroke:0.2px #111827;">What This Event Is All About</div><div class="t" style="left:1400.50px;top:389.80px;font-size:17.9px;font-weight:400;color:#111827;letter-spacing:-0.200px;-webkit-text-stroke:0.2px #111827;">Easy Way To Build a Wooden House</div><div class="t" style="left:1400.50px;top:497.80px;font-size:17.9px;font-weight:400;color:#111827;letter-spacing:0.078px;-webkit-text-stroke:0.2px #111827;">Securing your Lumber during transport</div><div class="t" style="left:1401.50px;top:604.80px;font-size:17.9px;font-weight:400;color:#111827;letter-spacing:0.120px;-webkit-text-stroke:0.2px #111827;">Woodworking: How I got started!</div><div class="t" style="left:957.20px;top:311.00px;font-size:14.9px;font-weight:400;color:#465062;letter-spacing:0.150px;-webkit-text-stroke:0.2px #465062;">Consumers</div><div class="t" style="left:1053.60px;top:311.00px;font-size:14.9px;font-weight:400;color:#465062;letter-spacing:0.020px;-webkit-text-stroke:0.2px #465062;">Round Table</div><div class="t" style="left:957.20px;top:419.00px;font-size:14.9px;font-weight:400;color:#465062;letter-spacing:0.150px;-webkit-text-stroke:0.2px #465062;">Consumers</div><div class="t" style="left:1053.60px;top:419.00px;font-size:14.9px;font-weight:400;color:#465062;letter-spacing:0.020px;-webkit-text-stroke:0.2px #465062;">Round Table</div><div class="t" style="left:957.20px;top:526.00px;font-size:14.9px;font-weight:400;color:#465062;letter-spacing:0.150px;-webkit-text-stroke:0.2px #465062;">Consumers</div><div class="t" style="left:1053.60px;top:526.00px;font-size:14.9px;font-weight:400;color:#465062;letter-spacing:0.020px;-webkit-text-stroke:0.2px #465062;">Round Table</div><div class="t" style="left:1414.20px;top:311.00px;font-size:14.9px;font-weight:400;color:#465062;letter-spacing:0.150px;-webkit-text-stroke:0.2px #465062;">Consumers</div><div class="t" style="left:1510.60px;top:311.00px;font-size:14.9px;font-weight:400;color:#465062;letter-spacing:0.050px;-webkit-text-stroke:0.2px #465062;">Sales</div><div class="t" style="left:1567.00px;top:311.00px;font-size:14.9px;font-weight:400;color:#465062;letter-spacing:-0.029px;-webkit-text-stroke:0.2px #465062;">Research</div><div class="t" style="left:1649.00px;top:311.00px;font-size:14.9px;font-weight:400;color:#465062;letter-spacing:0.233px;-webkit-text-stroke:0.2px #465062;">Keynote</div><div class="t" style="left:1414.20px;top:419.00px;font-size:14.9px;font-weight:400;color:#465062;letter-spacing:0.150px;-webkit-text-stroke:0.2px #465062;">Consumers</div><div class="t" style="left:1510.60px;top:419.00px;font-size:14.9px;font-weight:400;color:#465062;letter-spacing:0.336px;-webkit-text-stroke:0.2px #465062;">Lightning Talks</div><div class="t" style="left:1414.20px;top:526.00px;font-size:14.9px;font-weight:400;color:#465062;letter-spacing:0.000px;-webkit-text-stroke:0.2px #465062;">Research</div><div class="t" style="left:1496.40px;top:526.00px;font-size:14.9px;font-weight:400;color:#465062;letter-spacing:0.020px;-webkit-text-stroke:0.2px #465062;">Round Table</div><div class="t" style="left:1188.90px;top:3.80px;font-size:12.8px;font-weight:700;color:#fff;letter-spacing:0.000px;">33</div><div class="t" style="left:1865.60px;top:256.10px;font-size:21.2px;color:#6e737c;letter-spacing:-0.567px;transform:rotate(90deg);transform-origin:0 0;-webkit-text-stroke:0.3px #6e737c">Refused</div><div class="t" style="left:1865.60px;top:338.00px;font-size:21.2px;color:#6e737c;letter-spacing:-0.300px;transform:rotate(90deg);transform-origin:0 0;-webkit-text-stroke:0.3px #6e737c">(1)</div><div class="t" style="left:1913.80px;top:256.60px;font-size:21.2px;color:#6e737c;letter-spacing:-0.350px;transform:rotate(90deg);transform-origin:0 0;-webkit-text-stroke:0.3px #6e737c">Cancelled</div><div class="t" style="left:1913.80px;top:352.60px;font-size:21.2px;color:#6e737c;letter-spacing:-0.200px;transform:rotate(90deg);transform-origin:0 0;-webkit-text-stroke:0.3px #6e737c">(0)</div><div class="a" style="left:1896px;top:182px;width:16px;height:462px;background:#f1f1f1"></div><div class="a" style="left:1898px;top:203px;width:14px;height:137px;background:#c1c1c1"></div><svg style="left:1896px;top:182px" width="16" height="16"><path d="M4 13 L8 8 L12 13 Z" fill="#a3a3a3"/></svg><div class="a" style="left:13px;top:274px;width:429px;height:123px;border:5px solid #ee1c25"></div><div class="a" style="left:398px;top:190px;width:50px;height:39px;border:5px solid #ee1c25"></div></body></html>
